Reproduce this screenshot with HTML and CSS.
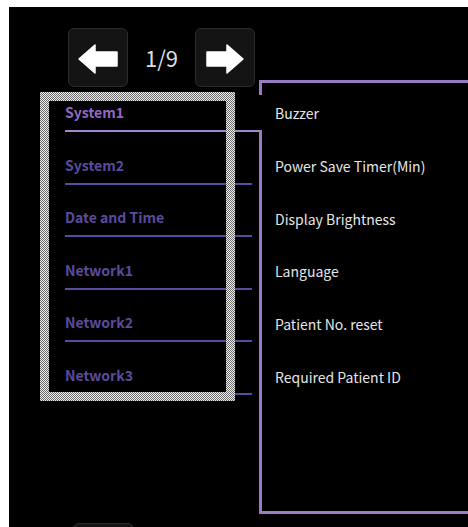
FILE: index.html
```html
<!DOCTYPE html>
<html>
<head>
<meta charset="utf-8">
<link rel="stylesheet" href="styles.css">
</head>
<body>
<div class="screen">
  <div class="side">
    <div class="nav">
      <div class="btn">
        <svg width="58" height="57" viewBox="0 0 58 57"><polygon points="10,30 26,16 26,23 48,23 48,37 26,37 26,44" fill="#fff" stroke="#fff" stroke-width="1.5" stroke-linejoin="round"/></svg>
      </div>
      <div class="page">1/9</div>
      <div class="btn">
        <svg width="57" height="57" viewBox="0 0 57 57"><polygon points="47,30 31,16 31,23 11,23 11,37 31,37 31,44" fill="#fff" stroke="#fff" stroke-width="1.5" stroke-linejoin="round"/></svg>
      </div>
    </div>
    <div class="menu-wrap">
      <div class="menu">
        <div class="item active">System1</div>
        <div class="item">System2</div>
        <div class="item">Date and Time</div>
        <div class="item">Network1</div>
        <div class="item">Network2</div>
        <div class="item">Network3</div>
      </div>
      <div class="focus"></div>
    </div>
    <div class="more"></div>
  </div>
  <div class="panel">
    <div class="row">Buzzer</div>
    <div class="row">Power Save Timer(Min)</div>
    <div class="row">Display Brightness</div>
    <div class="row">Language</div>
    <div class="row">Patient No. reset</div>
    <div class="row">Required Patient ID</div>
  </div>
</div>
</body>
</html>
```
FILE: styles.css
```css
html, body {
  margin: 0;
  padding: 0;
  background: #fff;
}
body {
  font-family: "Noto Sans CJK KR", "Noto Sans", sans-serif;
}
.screen {
  margin: 7px 0 0 9px;
  height: 520px;
  overflow: hidden;
  background: #000;
  display: grid;
  grid-template-columns: 250px 1fr;
  align-items: start;
}
.side {
  display: flex;
  flex-direction: column;
}
.nav {
  display: flex;
  align-items: center;
  padding: 21px 0 0 59px;
}
.btn {
  width: 58px;
  height: 57px;
  border: 1px solid #2c2c2c;
  border-radius: 6px;
  background: #141414;
  display: flex;
}
.page {
  width: 67px;
  text-align: center;
  color: #dedede;
  font-size: 22px;
  line-height: 59px;
}
.menu-wrap {
  position: relative;
  margin: 4px 0 0 31px;
  height: 310px;
}
.menu {
  display: flex;
  flex-direction: column;
  gap: 11.6px;
  padding-left: 25px;
}
.item {
  width: 187px;
  padding: 11px 0 8px;
  line-height: 20px;
  font-size: 14px;
  font-weight: 700;
  color: #5b4b9e;
  border-bottom: 2px solid #5b4b9e;
}
.item.active {
  width: 197px;
  color: #9168c6;
  border-bottom-color: #a586cf;
}
.focus {
  position: absolute;
  left: 0;
  top: 1px;
  width: 195px;
  height: 309px;
  box-sizing: border-box;
  padding: 9px;
  background: repeating-conic-gradient(#f0f0f0 0 25%, #6a6a6a 0 50%) 0 0 / 2px 2px;
  -webkit-mask: linear-gradient(#000 0 0) content-box, linear-gradient(#000 0 0);
  -webkit-mask-composite: xor;
  mask-composite: exclude;
}
.more {
  margin: 122px 0 0 64px;
  width: 59px;
  height: 30px;
  border: 1px solid #2c2c2c;
  border-radius: 6px;
  background: #141414;
}
.panel {
  position: relative;
  margin-top: 73px;
  height: 434px;
  box-sizing: border-box;
  border: 3px solid #9a7cc2;
  border-right: none;
  padding: 20px 0 0 13px;
  display: flex;
  flex-direction: column;
  gap: 32.8px;
}
.panel::before {
  content: "";
  position: absolute;
  left: -3px;
  top: 12px;
  width: 3px;
  height: 35px;
  background: #000;
}
.row {
  line-height: 20px;
  font-size: 14px;
  font-weight: 400;
  color: #e6e6e6;
  white-space: nowrap;
}
```
